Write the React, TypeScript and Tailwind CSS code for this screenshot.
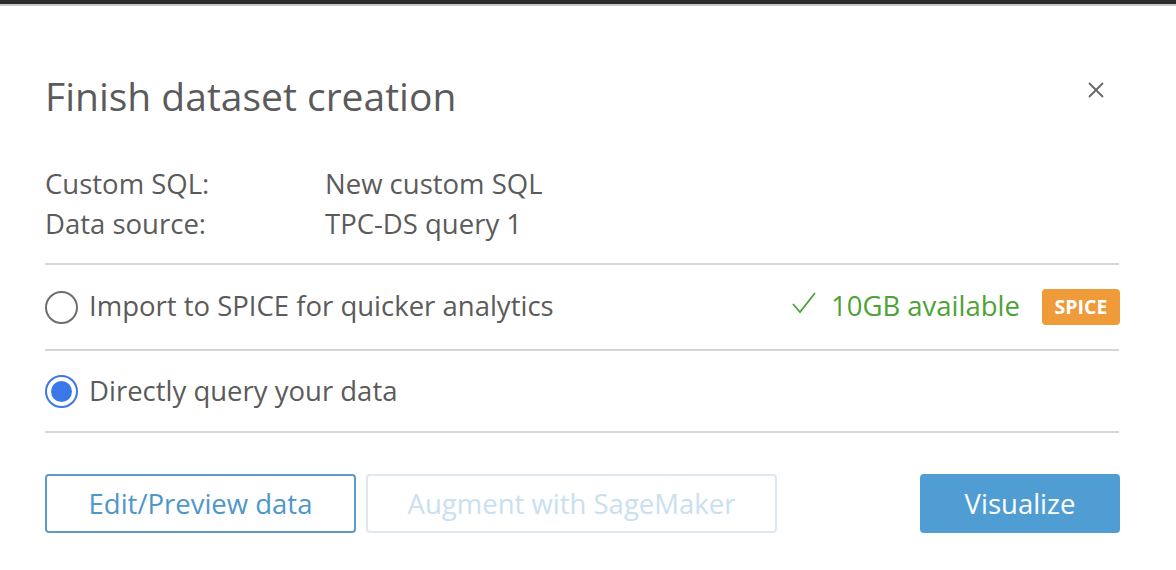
import React from "react";

export default function App() {
  return (
    <div className="w-[1176px] h-[570px] bg-white overflow-hidden text-[#5b5b5b]" style={{ fontFamily: "'Open Sans', 'Noto Sans', sans-serif" }}>
      <div className="h-[4px] bg-[#2b2b2b]" />
      <div className="h-[2px] bg-[#c9c9c9]" />
      <div className="pl-[45px] pr-[56px]">
        <div className="flex items-center justify-between h-[52px] mt-[64px]">
          <h1 className="text-[39px] leading-[52px] text-[#5b5b5b]">Finish dataset creation</h1>
          <button className="w-[20px] h-[20px] mr-[14px] -mt-[12px] flex items-center justify-center">
            <svg width="18" height="18" viewBox="0 0 18 18">
              <path d="M2 2 L16 16 M16 2 L2 16" stroke="#666" strokeWidth="1.8" fill="none" />
            </svg>
          </button>
        </div>
        <div className="mt-[42px] text-[27.5px] leading-[40px]">
          <div className="flex">
            <span className="w-[280px]">Custom SQL:</span>
            <span>New custom SQL</span>
          </div>
          <div className="flex">
            <span className="w-[280px]">Data source:</span>
            <span>TPC-DS query 1</span>
          </div>
        </div>
        <div className="mt-[19px] h-[2px] bg-[#d5d5d5] mr-[1px]" />
        <div className="h-[84px] flex items-center text-[27.5px]">
          <span className="w-[33px] h-[33px] rounded-full border-[2px] border-[#6e6e6e] shrink-0" />
          <span className="ml-[11px] -mt-[2px]">Import to SPICE for quicker analytics</span>
          <div className="ml-auto flex items-center">
            <svg width="26" height="24" viewBox="0 0 26 24" className="-mt-[8px]">
              <path d="M2 13 L9 21 L24 2" stroke="#4ea236" strokeWidth="1.8" fill="none" />
            </svg>
            <span className="ml-[14px] -mt-[2px] text-[#4ea236]">10GB available</span>
            <span className="ml-[22px] w-[78px] h-[36px] rounded-[4px] bg-[#f09b3a] text-white text-[19.5px] font-bold flex items-center justify-center">SPICE</span>
          </div>
        </div>
        <div className="h-[2px] bg-[#d5d5d5] mr-[1px]" />
        <div className="h-[80px] flex items-center text-[27.5px]">
          <span className="w-[33px] h-[33px] rounded-full border-[2px] border-[#3a78e8] shrink-0 flex items-center justify-center">
            <span className="w-[21px] h-[21px] rounded-full bg-[#3a78e8]" />
          </span>
          <span className="ml-[11px]">Directly query your data</span>
        </div>
        <div className="h-[2px] bg-[#d5d5d5] mr-[1px]" />
        <div className="mt-[41px] flex items-center text-[27.5px]">
          <button className="w-[311px] h-[59px] rounded-[4px] border-[2px] border-[#5b9bc6] text-[#4f97c9] bg-white">Edit/Preview data</button>
          <button className="ml-[10px] w-[411px] h-[59px] rounded-[4px] border-[2px] border-[#dce9f3] text-[#c9e0f0] bg-white">Augment with SageMaker</button>
          <button className="ml-auto w-[200px] h-[59px] rounded-[4px] bg-[#4f9dd3] text-white">Visualize</button>
        </div>
      </div>
    </div>
  );
}
